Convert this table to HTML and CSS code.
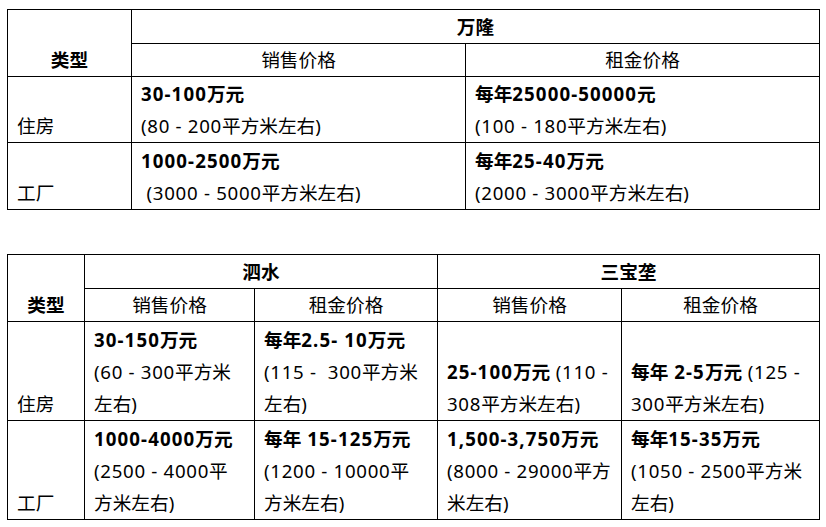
FILE: index.html
```html
<!DOCTYPE html>
<html lang="zh">
<head>
<meta charset="utf-8">
<link rel="stylesheet" href="styles.css">
</head>
<body>
<div class="page">
  <table class="grid">
    <colgroup>
      <col class="c-type1"><col class="c-a1"><col class="c-b1">
    </colgroup>
    <tr class="h1">
      <th class="center" rowspan="2"><div class="ln">类型</div></th>
      <th colspan="2" class="center"><div class="ln">万隆</div></th>
    </tr>
    <tr class="h2">
      <td class="center"><div class="ln">销售价格</div></td>
      <td class="center"><div class="ln">租金价格</div></td>
    </tr>
    <tr class="r66">
      <td><div class="ln">住房</div></td>
      <td><div class="ln"><b><span class="n">30-100</span>万元</b></div><div class="ln"><span class="n">(80 - 200</span>平方米左右<span class="n">)</span></div></td>
      <td><div class="ln"><b>每年<span class="n">25000-50000</span>元</b></div><div class="ln"><span class="n">(100 - 180</span>平方米左右<span class="n">)</span></div></td>
    </tr>
    <tr class="r67">
      <td><div class="ln">工厂</div></td>
      <td><div class="ln"><b><span class="n">1000-2500</span>万元</b></div><div class="ln"><span class="n">&nbsp;(3000 - 5000</span>平方米左右<span class="n">)</span></div></td>
      <td><div class="ln"><b>每年<span class="n">25-40</span>万元</b></div><div class="ln"><span class="n">(2000 - 3000</span>平方米左右<span class="n">)</span></div></td>
    </tr>
  </table>

  <table class="grid">
    <colgroup>
      <col class="c-type2"><col class="c-a2"><col class="c-b2"><col class="c-c2"><col class="c-d2">
    </colgroup>
    <tr class="h1">
      <th class="center" rowspan="2"><div class="ln">类型</div></th>
      <th colspan="2" class="center"><div class="ln">泗水</div></th>
      <th colspan="2" class="center"><div class="ln">三宝垄</div></th>
    </tr>
    <tr class="h2">
      <td class="center"><div class="ln">销售价格</div></td>
      <td class="center"><div class="ln">租金价格</div></td>
      <td class="center"><div class="ln">销售价格</div></td>
      <td class="center"><div class="ln">租金价格</div></td>
    </tr>
    <tr class="r99">
      <td><div class="ln">住房</div></td>
      <td><div class="ln"><b><span class="n">30-150</span>万元</b></div><div class="ln"><span class="n">(60 - 300</span>平方米</div><div class="ln">左右<span class="n">)</span></div></td>
      <td><div class="ln"><b>每年<span class="n">2.5- 10</span>万元</b></div><div class="ln"><span class="n">(115 -&nbsp; 300</span>平方米</div><div class="ln">左右<span class="n">)</span></div></td>
      <td><div class="ln"><b><span class="n">25-100</span>万元</b><span class="n"> (110 -</span></div><div class="ln"><span class="n">308</span>平方米左右<span class="n">)</span></div></td>
      <td><div class="ln"><b>每年<span class="n"> 2-5</span>万元</b><span class="n"> (125 -</span></div><div class="ln"><span class="n">300</span>平方米左右<span class="n">)</span></div></td>
    </tr>
    <tr class="r99">
      <td><div class="ln">工厂</div></td>
      <td><div class="ln"><b><span class="n">1000-4000</span>万元</b></div><div class="ln"><span class="n">(2500 - 4000</span>平</div><div class="ln">方米左右<span class="n">)</span></div></td>
      <td><div class="ln"><b>每年<span class="n"> 15-125</span>万元</b></div><div class="ln"><span class="n">(1200 - 10000</span>平</div><div class="ln">方米左右<span class="n">)</span></div></td>
      <td><div class="ln"><b><span class="n">1,500-3,750</span>万元</b></div><div class="ln"><span class="n">(8000 - 29000</span>平方</div><div class="ln">米左右<span class="n">)</span></div></td>
      <td><div class="ln"><b>每年<span class="n">15-35</span>万元</b></div><div class="ln"><span class="n">(1050 - 2500</span>平方米</div><div class="ln">左右<span class="n">)</span></div></td>
    </tr>
  </table>
</div>
</body>
</html>
```

FILE: styles.css
```css
html, body {
  margin: 0;
  padding: 0;
  background: #ffffff;
}
.page {
  padding: 9px 0 0 7px;
  display: flex;
  flex-direction: column;
  gap: 44px;
  align-items: flex-start;
}
.grid {
  border-collapse: collapse;
  table-layout: fixed;
  width: 812px;
  font-family: "Noto Sans", "Noto Sans CJK SC", sans-serif;
  font-size: 18.67px;
  color: #000;
}
.grid th, .grid td {
  border: 1px solid #000;
  padding: 0 0 0 9px;
  vertical-align: bottom;
  text-align: left;
  font-weight: normal;
  white-space: nowrap;
  overflow: hidden;
}
.grid th { font-weight: bold; }
.grid b { font-weight: bold; }
.grid .center { text-align: center; padding: 0; }
.ln {
  height: 32px;
  box-sizing: border-box;
  padding-top: 1px;
  line-height: 30px;
  overflow: visible;
}
.n { letter-spacing: 0.7px; }
b .n { letter-spacing: 1.1px; }
.c-type1 { width: 124px; }
.c-a1 { width: 334px; }
.c-b1 { width: 354px; }
.c-type2 { width: 77px; }
.c-a2 { width: 170px; }
.c-b2 { width: 183px; }
.c-c2 { width: 184px; }
.c-d2 { width: 198px; }
.h1 { height: 34px; }
.h2 { height: 33px; }
.r66 { height: 66px; }
.r67 { height: 67px; }
.r99 { height: 99px; }
```
